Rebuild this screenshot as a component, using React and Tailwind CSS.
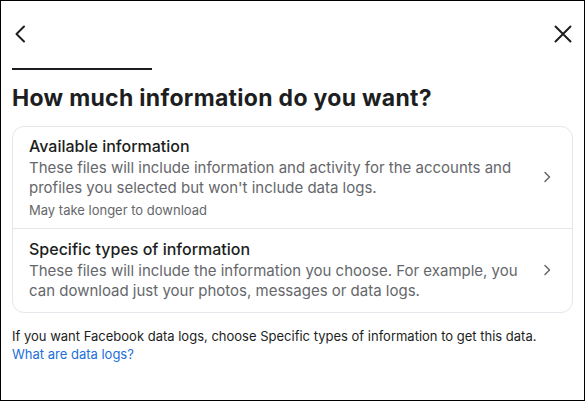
import React from 'react';

const font = { fontFamily: 'Inter, "Noto Sans", sans-serif' };

const Chevron = () => (
  <svg width="10" height="14" viewBox="0 0 10 14" fill="none" className="shrink-0">
    <path d="M3 2.5 L7.5 7 L3 11.5" stroke="#65676b" strokeWidth="1.5" strokeLinecap="round" strokeLinejoin="round" />
  </svg>
);

const Option = ({ title, desc, note, last }) => (
  <div className={`flex items-center pl-4 pr-5 ${last ? 'pt-[10px] pb-[11px]' : 'pt-[9px] pb-[10px] border-b border-[#e4e6eb]'}`}>
    <div className="flex-1">
      <div className="text-[16px] leading-[20px] font-medium text-[#1c1e21] mb-[2px]">{title}</div>
      <div className="text-[15px] leading-[20px] text-[#65676b] pr-6">{desc}</div>
      {note && <div className="text-[13px] leading-[16px] text-[#65676b] mt-[4px]">{note}</div>}
    </div>
    <Chevron />
  </div>
);

export default function App() {
  return (
    <div style={font} className="w-[585px] h-[401px] border border-black bg-white text-[#1c1e21]">
      <div className="flex justify-between items-center pl-[13px] pr-[12px] pt-[16px] h-[50px]">
        <svg width="14" height="18" viewBox="0 0 14 18" fill="none">
          <path d="M10 1.5 L2.5 9 L10 16.5" stroke="#1c1e21" strokeWidth="2" strokeLinecap="round" strokeLinejoin="round" />
        </svg>
        <svg width="18" height="18" viewBox="0 0 18 18" fill="none">
          <path d="M1.5 1.5 L16.5 16.5 M16.5 1.5 L1.5 16.5" stroke="#1c1e21" strokeWidth="2" strokeLinecap="round" />
        </svg>
      </div>
      <div className="px-[11px]">
        <div className="mt-[17px] w-[140px] h-[2px] bg-[#1c1e21]" />
        <h1 className="mt-[14px] text-[23px] leading-[28px] font-bold tracking-[0.3px]">How much information do you want?</h1>
        <div className="mt-[14px] border border-[#e4e6eb] rounded-[12px]">
          <Option
            title="Available information"
            desc="These files will include information and activity for the accounts and profiles you selected but won't include data logs."
            note="May take longer to download"
          />
          <Option
            title="Specific types of information"
            desc="These files will include the information you choose. For example, you can download just your photos, messages or data logs."
            last
          />
        </div>
        <p className="mt-[14px] text-[13px] leading-[18px]">
          If you want Facebook data logs, choose Specific types of information to get this data.
        </p>
        <a className="text-[13px] leading-[18px] text-[#216fdb] block">What are data logs?</a>
      </div>
    </div>
  );
}
